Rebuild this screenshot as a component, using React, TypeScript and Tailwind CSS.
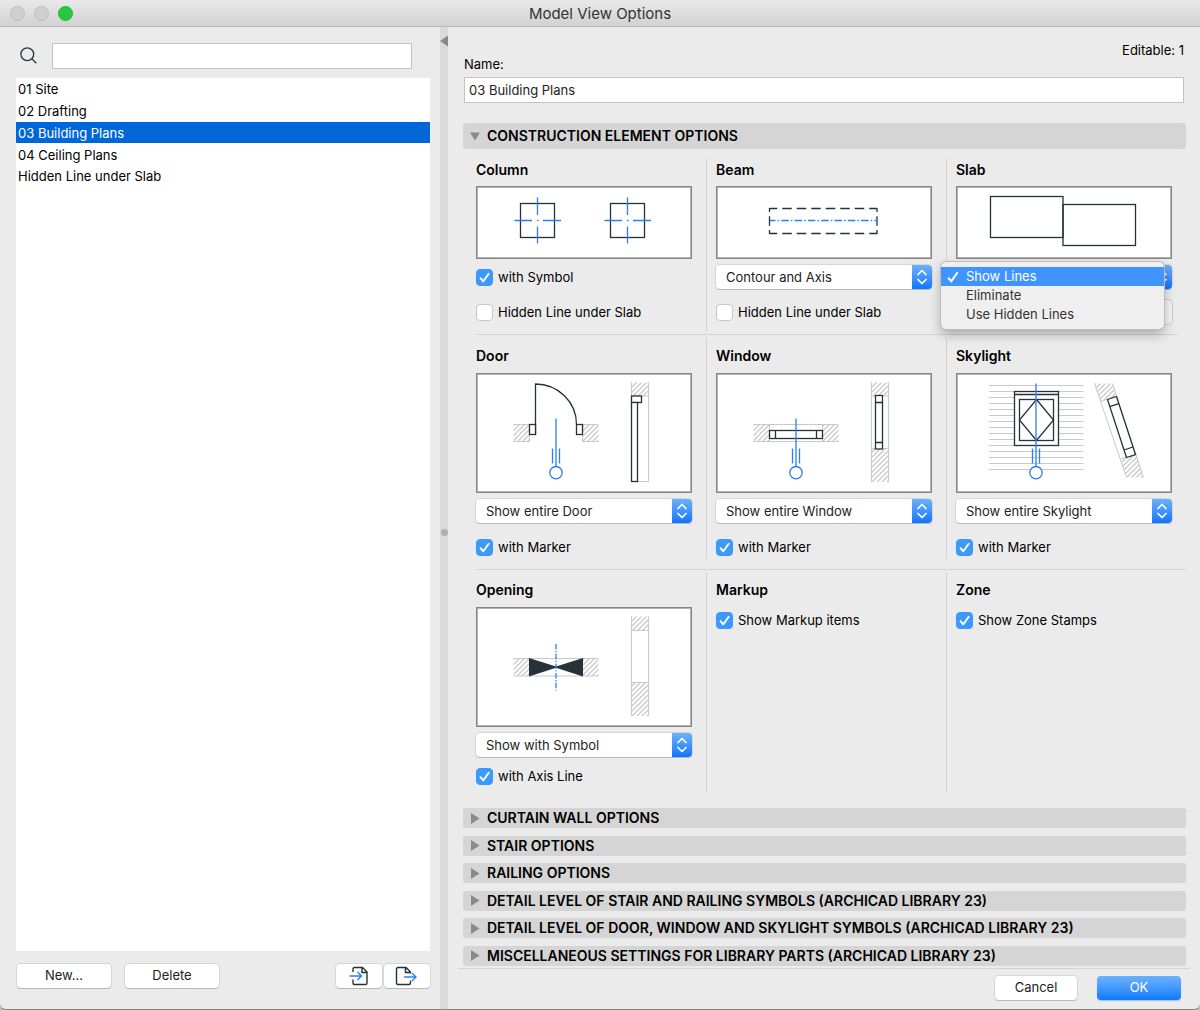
import { useState, type ReactNode } from "react";

const INK = "#263238";
const BLUE = "#2b7cff";
const PALE = "#c9c9c9";

const views = ["01 Site", "02 Drafting", "03 Building Plans", "04 Ceiling Plans", "Hidden Line under Slab"];

const closedSections = [
  "CURTAIN WALL OPTIONS",
  "STAIR OPTIONS",
  "RAILING OPTIONS",
  "DETAIL LEVEL OF STAIR AND RAILING SYMBOLS (ARCHICAD LIBRARY 23)",
  "DETAIL LEVEL OF DOOR, WINDOW AND SKYLIGHT SYMBOLS (ARCHICAD LIBRARY 23)",
  "MISCELLANEOUS SETTINGS FOR LIBRARY PARTS (ARCHICAD LIBRARY 23)",
];

function Hatch({ id }: { id: string }) {
  return (
    <defs>
      <pattern id={id} width="5" height="5" patternUnits="userSpaceOnUse">
        <path d="M-1 1 L1 -1 M0 5 L5 0 M4 6 L6 4" stroke={PALE} strokeWidth="1.3" />
      </pattern>
    </defs>
  );
}

function Marker({ top = 45.5 }: { top?: number }) {
  return (
    <g stroke={BLUE} strokeWidth="1.3" fill="none">
      <path d={`M80 ${top} V93.5 M76.5 75.5 V90.5 M83.5 75.5 V90.5`} />
      <circle cx="80" cy="99.7" r="6.2" fill="#fff" />
    </g>
  );
}

function Preview({ tall = false, label, children }: { tall?: boolean; label: string; children: ReactNode }) {
  return (
    <div
      className={
        tall
          ? "mt-[7px] flex h-[120px] items-center justify-center border border-[#858585] bg-white shadow-[inset_0_0_0_1px_#b4b4b4]"
          : "mt-[6px] flex h-[73px] items-center justify-center border border-[#858585] bg-white shadow-[inset_0_0_0_1px_#b4b4b4]"
      }
    >
      <svg
        role="img"
        aria-label={label}
        viewBox={tall ? "2 2 212 116" : "2 2 212 69"}
        className={tall ? "h-[116px] w-[212px] shrink-0" : "h-[69px] w-[212px] shrink-0"}
        fill="none"
      >
        {children}
      </svg>
    </div>
  );
}

function Title({ children }: { children: ReactNode }) {
  return <h3 className="h-5 text-sm leading-5 font-semibold">{children}</h3>;
}

function Popup({ label, value }: { label: string; value: string }) {
  return (
    <div className="relative h-6 rounded-[4px] bg-white shadow-[0_1px_0_#b8b8b8,0_0_0_1px_#d6d6d6]">
      <select aria-label={label} defaultValue={value} className="h-6 w-full appearance-none rounded-[4px] pr-6 pl-[10px] leading-6 text-[#222]">
        <option>{value}</option>
      </select>
      <span className="pointer-events-none absolute inset-y-0 right-0 flex w-5 items-center justify-center rounded-r-[4px] bg-linear-to-b from-[#6bb0fa] to-[#0a74fd]">
        <svg width="10" height="16" viewBox="0 0 10 16" fill="none" stroke="#fff" strokeWidth="1.7" strokeLinecap="round" strokeLinejoin="round" aria-hidden="true">
          <path d="M1 5.5 L5 1.5 L9 5.5 M1 10.5 L5 14.5 L9 10.5" />
        </svg>
      </span>
    </div>
  );
}

function Check({ label, checked = false }: { label: string; checked?: boolean }) {
  return (
    <label className="flex h-6 items-center gap-[5px]">
      <span className="relative h-[17px] w-[17px] shrink-0">
        <input
          type="checkbox"
          defaultChecked={checked}
          className="peer block h-[17px] w-[17px] appearance-none rounded-[4px] border border-[#c6c6c6] bg-white checked:border-[#3b99fc] checked:bg-[#3b99fc]"
        />
        <svg viewBox="0 0 17 17" className="pointer-events-none absolute inset-0 hidden h-[17px] w-[17px] peer-checked:block" fill="none" stroke="#fff" strokeWidth="1.9" strokeLinecap="round" strokeLinejoin="round" aria-hidden="true">
          <path d="M4.5 9.2 L7.3 12.3 L12.7 4.8" />
        </svg>
      </span>
      <span className="pt-0.5">{label}</span>
    </label>
  );
}

function ColumnDrawing() {
  return (
    <>
      {[62, 152].map((cx) => (
        <g key={cx}>
          <rect x={cx - 17.5} y="17.5" width="34" height="34" stroke={INK} strokeWidth="1.3" />
          <path
            d={`M${cx - 23.5} 34.5 h17.5 M${cx - 1} 34.5 h1.5 M${cx + 5} 34.5 h18 M${cx - 0.5} 11.5 v17.5 M${cx - 0.5} 40.5 v17`}
            stroke={BLUE}
            strokeWidth="1.3"
          />
        </g>
      ))}
    </>
  );
}

function BeamDrawing() {
  return (
    <>
      <path d="M53.5 22.5 H161 M53.5 47.5 H161" stroke={INK} strokeWidth="1.3" strokeDasharray="9.5 5" strokeDashoffset="1.75" />
      <path d="M53.5 22 V48 M161 22 V48" stroke={INK} strokeWidth="1.3" strokeDasharray="4 4.25 9.5 4.25 4 20" />
      <path d="M54 34.5 H161" stroke={BLUE} strokeWidth="1.3" strokeDasharray="7.5 2.2 1.4 2.2" strokeDashoffset="2" />
    </>
  );
}

function SlabDrawing() {
  return (
    <g stroke={INK} strokeWidth="1.3">
      <rect x="34.5" y="10.5" width="72.5" height="41" />
      <rect x="107" y="18.5" width="72.5" height="41" />
    </g>
  );
}

function DoorDrawing() {
  return (
    <>
      <Hatch id="hatch-door" />
      <path d="M37.5 51.5 H53.5 V68.5 H37.5 Z M106.5 51.5 H122.5 V68.5 H106.5 Z M155.5 9.5 H172.5 V23 H155.5 Z" fill="url(#hatch-door)" />
      <path d="M37.5 51.5 H53.5 V68.5 H37.5 M122.5 51.5 H106.5 V68.5 H122.5 M155.5 9.5 V23 H172.5 M172.5 9.5 V108.5 H155.5" stroke={PALE} />
      <g stroke={INK} strokeWidth="1.3">
        <path d="M59.5 61.5 V11 C82 11 100.5 29 100.5 51.5" />
        <rect x="53.5" y="51.5" width="6" height="10" fill="#fff" />
        <rect x="100.5" y="51.5" width="6" height="10" fill="#fff" />
        <rect x="155.5" y="23" width="10" height="6.5" fill="#fff" />
        <rect x="155.5" y="29.5" width="6" height="79" fill="#fff" />
      </g>
      <Marker />
    </>
  );
}

function WindowDrawing() {
  return (
    <>
      <Hatch id="hatch-window" />
      <path d="M37.5 51.5 H53.5 V68.5 H37.5 Z M106.5 51.5 H122.5 V68.5 H106.5 Z M155.5 9.5 H172.5 V23 H155.5 Z M155.5 75.5 H172.5 V109 H155.5 Z" fill="url(#hatch-window)" />
      <path d="M37.5 51.5 H122.5 M37.5 68.5 H122.5 M53.5 51.5 V68.5 M106.5 51.5 V68.5 M155.5 9.5 V109 M172.5 9.5 V109 M155.5 23 H172.5 M155.5 75.5 H172.5" stroke={PALE} />
      <g stroke={INK} strokeWidth="1.3">
        <rect x="53.5" y="57.5" width="53" height="8" fill="#fff" />
        <path d="M59.5 57.5 V65.5 M100.5 57.5 V65.5" />
        <rect x="159.5" y="22.5" width="7" height="53.5" fill="#fff" />
        <path d="M159.5 29.5 H166.5 M159.5 69.5 H166.5" />
      </g>
      <Marker />
    </>
  );
}

function SkylightDrawing() {
  return (
    <>
      <Hatch id="hatch-skylight" />
      <path
        d={Array.from({ length: 15 }, (_, i) => `M33 ${12.5 + i * 6} H127.5`).join(" ")}
        stroke={PALE}
      />
      <g stroke={INK} strokeWidth="1.3">
        <rect x="58.5" y="18.5" width="44" height="54" fill="#fff" />
        <path d="M58.5 21.5 H102.5" />
        <rect x="63.5" y="26.5" width="34" height="41" />
        <path d="M80.5 26.5 L97.5 47 L80.5 67.5 L63.5 47 Z" />
      </g>
      <path d="M138.5 10.5 H156.5 L160.5 23 L144.5 28.5 Z M164.5 86 L180 81 L187.5 104.5 H170.5 Z" fill="url(#hatch-skylight)" />
      <path d="M138.5 10.5 L170.5 104.5 M156.5 10.5 L187.5 104.5 M144.5 28.5 L160.5 23 M164.5 86 L180 81" stroke={PALE} />
      <g stroke={INK} strokeWidth="1.3">
        <path d="M151.5 26.5 L160.5 23.5 L179.5 81.5 L170.5 84.5 Z" fill="#fff" />
        <path d="M153.8 33.7 L162.8 30.7 M168 77 L177 74" />
      </g>
      <Marker top={10.5} />
    </>
  );
}

function OpeningDrawing() {
  return (
    <>
      <Hatch id="hatch-opening" />
      <path d="M37.5 51.5 H53.5 V69 H37.5 Z M106.5 51.5 H122.5 V69 H106.5 Z M155.5 9.5 H172.5 V23.5 H155.5 Z M155.5 75.5 H172.5 V109 H155.5 Z" fill="url(#hatch-opening)" />
      <path d="M37.5 51.5 H122.5 M37.5 69 H122.5 M155.5 9.5 V109 M172.5 9.5 V109 M155.5 23.5 H172.5 M155.5 75.5 H172.5" stroke={PALE} />
      <path d="M53 51 L80 59.6 L107 51 V69.5 L80 60.8 L53 69.5 Z" fill={INK} />
      <path d="M80 37 V83.5" stroke={BLUE} strokeWidth="1.3" strokeDasharray="5.5 1.5 1.2 1.5" />
    </>
  );
}

function Cell({ pad, children }: { pad: string; children: ReactNode }) {
  return <div className={`border-l border-[#d3d3d3] pr-[14px] pl-[9px] first:border-transparent ${pad}`}>{children}</div>;
}

function Menu() {
  const [chosen, setChosen] = useState("Show Lines");
  return (
    <ul
      role="listbox"
      aria-label="Slab lines"
      className="absolute -top-[3px] -left-[15px] z-10 w-[223px] rounded-[5px] bg-[#efefef] py-[5px] text-[#333] shadow-[0_0_0_1px_#bcbcbc,0_5px_12px_rgba(0,0,0,0.3)]"
    >
      {["Show Lines", "Eliminate", "Use Hidden Lines"].map((item) => (
        <li key={item} role="option" aria-selected={item === chosen}>
          <button
            type="button"
            onClick={() => setChosen(item)}
            className={
              item === chosen
                ? "flex h-[19px] w-full items-center bg-[#3f95fd] pl-[6px] text-white"
                : "flex h-[19px] w-full items-center pl-[6px]"
            }
          >
            <span className="flex w-[19px] shrink-0">
              {item === chosen && (
                <svg width="12" height="12" viewBox="0 0 12 12" fill="none" stroke="#fff" strokeWidth="2" aria-hidden="true">
                  <path d="M1.2 6.8 L4.4 10.2 L10.6 1.2" />
                </svg>
              )}
            </span>
            {item}
          </button>
        </li>
      ))}
    </ul>
  );
}

const pushButton =
  "rounded-[4px] bg-white text-[#222] shadow-[0_1px_0_#b8b8b8,0_0_0_1px_#d6d6d6]";

export default function App() {
  const [selected, setSelected] = useState("03 Building Plans");

  return (
    <div className="bg-[#b9b9b9] font-['Inter','Liberation_Sans',sans-serif] text-[13px] text-black">
      <div className="flex min-h-screen flex-col overflow-hidden rounded-b-[6px] border-b border-[#858585] bg-[#ebebeb]">
        <header className="grid h-[27px] grid-cols-[1fr_auto_1fr] items-center border-b border-[#bababa] bg-linear-to-b from-[#e9e9e9] to-[#d2d2d2]">
          <div className="flex gap-[9px] pl-[10px]">
            <button type="button" aria-label="Close" className="h-[15px] w-[15px] rounded-full border border-[#bdbdbd] bg-[#cfcfcf]" />
            <button type="button" aria-label="Minimize" className="h-[15px] w-[15px] rounded-full border border-[#bdbdbd] bg-[#cfcfcf]" />
            <button type="button" aria-label="Zoom" className="h-[15px] w-[15px] rounded-full border border-[#1fb535] bg-[#28c940]" />
          </div>
          <h1 className="pt-0.5 text-[15px] leading-5 text-[#333]">Model View Options</h1>
        </header>

        <div className="flex flex-1">
          <aside className="flex w-[440px] shrink-0 flex-col pt-4 pr-[10px] pb-[21px] pl-4">
            <div className="flex items-center pr-[18px]">
              <svg width="20" height="20" viewBox="0 0 20 20" fill="none" stroke={INK} strokeWidth="1.3" className="mr-[13px] ml-[3px] shrink-0" aria-hidden="true">
                <circle cx="8.3" cy="8.3" r="6.4" />
                <path d="M12.9 12.9 L17.3 17.3" />
              </svg>
              <input type="search" aria-label="Search" className="h-[26px] min-w-0 flex-1 border border-[#c2c2c2] bg-white px-1" />
            </div>
            <div className="mt-[9px] flex-1 bg-white">
              <ul className="grid h-[109px] grid-rows-5">
                {views.map((v) => (
                  <li key={v} className="grid">
                    <button
                      type="button"
                      onClick={() => setSelected(v)}
                      className={v === selected ? "bg-[#0067d9] px-0.5 pt-0.5 text-left text-white" : "px-0.5 pt-0.5 text-left"}
                    >
                      {v}
                    </button>
                  </li>
                ))}
              </ul>
            </div>
            <div className="mt-3 flex h-[25px] items-center">
              <button type="button" className={`ml-px h-6 w-[94px] ${pushButton}`}>New...</button>
              <button type="button" className={`ml-[14px] h-6 w-[94px] ${pushButton}`}>Delete</button>
              <button type="button" aria-label="Import" className={`ml-auto flex h-6 w-[46px] items-center justify-center ${pushButton}`}>
                <svg width="24" height="20" viewBox="0 0 24 20" fill="none" strokeWidth="1.4" aria-hidden="true">
                  <path d="M6 6 V3 Q6 1.5 7.5 1.5 H15.5 L20 6 V17 Q20 18.5 18.5 18.5 H7.5 Q6 18.5 6 17 V13.5 M15 2 V6.5 H20" stroke={INK} />
                  <path d="M2.5 10 H14.5 M10.5 6 L14.5 10 L10.5 14" stroke={BLUE} />
                </svg>
              </button>
              <button type="button" aria-label="Export" className={`ml-[2px] flex h-6 w-[46px] items-center justify-center ${pushButton}`}>
                <svg width="24" height="20" viewBox="0 0 24 20" fill="none" strokeWidth="1.4" aria-hidden="true">
                  <path d="M15.5 7.5 V6 L11 1.5 H3 Q1.5 1.5 1.5 3 V17 Q1.5 18.5 3 18.5 H14 Q15.5 18.5 15.5 17 V14.5 M10.5 2 V6.5 H15.5" stroke={INK} />
                  <path d="M9 11 H21 M17 7 L21 11 L17 15" stroke={BLUE} />
                </svg>
              </button>
            </div>
          </aside>

          <div className="flex w-2 shrink-0 flex-col bg-[#dadada] pt-2">
            <svg width="8" height="12" viewBox="0 0 8 12" aria-hidden="true">
              <path d="M0 6 L8 0.5 V11.5 Z" fill="#8a8a8a" />
            </svg>
            <div className="flex flex-1 items-center justify-center pt-2">
              <span className="h-[7px] w-[7px] rounded-full bg-[#b0b0b0]" />
            </div>
          </div>

          <main className="flex min-w-0 flex-1 flex-col pt-[13px]">
            <div className="flex h-[34px] justify-between px-4 leading-5">
              <label htmlFor="view-name" className="self-end">Name:</label>
              <p>Editable: 1</p>
            </div>
            <div className="mt-[3px] flex px-4">
              <input id="view-name" defaultValue="03 Building Plans" className="h-[26px] min-w-0 flex-1 border border-[#c2c2c2] bg-white px-1 text-[#222]" />
            </div>

            <h2 className="mt-5 mr-[14px] ml-[15px]">
              <button type="button" aria-expanded="true" className="flex h-[26px] w-full items-center rounded-[3px] bg-[#d5d5d5] pl-[7px] text-sm font-semibold">
                <svg width="10" height="9" viewBox="0 0 10 9" className="mr-[7px]" aria-hidden="true">
                  <path d="M0 0.5 H10 L5 8.5 Z" fill="#8a8a8a" />
                </svg>
                CONSTRUCTION ELEMENT OPTIONS
              </button>
            </h2>

            <div className="mt-[9px] mr-[14px] ml-[18px]">
              <div className="grid grid-cols-3">
                <Cell pad="pt-[2px] pb-[7px]">
                  <Title>Column</Title>
                  <Preview label="Column symbol"><ColumnDrawing /></Preview>
                  <div className="mt-[6px]"><Check label="with Symbol" checked /></div>
                  <div className="mt-[11px]"><Check label="Hidden Line under Slab" /></div>
                </Cell>
                <Cell pad="pt-[2px] pb-[7px]">
                  <Title>Beam</Title>
                  <Preview label="Beam symbol"><BeamDrawing /></Preview>
                  <div className="mt-[6px]"><Popup label="Beam display" value="Contour and Axis" /></div>
                  <div className="mt-[11px]"><Check label="Hidden Line under Slab" /></div>
                </Cell>
                <Cell pad="pt-[2px] pb-[7px]">
                  <Title>Slab</Title>
                  <Preview label="Slab symbol"><SlabDrawing /></Preview>
                  <div className="relative mt-[6px]">
                    <Popup label="Slab display" value="Show Lines" />
                    <button type="button" aria-label="Slab line type" className="mt-[11px] block h-6 w-full rounded-[4px] bg-[#f4f4f4] shadow-[0_0_0_1px_#c9c9c9]" />
                    <Menu />
                  </div>
                </Cell>
              </div>
              <hr className="mt-[3px] mr-2 ml-[10px] border-[#d3d3d3]" />

              <div className="mt-[3px] grid grid-cols-3">
                <Cell pad="pt-2">
                  <Title>Door</Title>
                  <Preview tall label="Door symbol"><DoorDrawing /></Preview>
                  <div className="mt-[6px]"><Popup label="Door display" value="Show entire Door" /></div>
                  <div className="mt-3"><Check label="with Marker" checked /></div>
                </Cell>
                <Cell pad="pt-2">
                  <Title>Window</Title>
                  <Preview tall label="Window symbol"><WindowDrawing /></Preview>
                  <div className="mt-[6px]"><Popup label="Window display" value="Show entire Window" /></div>
                  <div className="mt-3"><Check label="with Marker" checked /></div>
                </Cell>
                <Cell pad="pt-2">
                  <Title>Skylight</Title>
                  <Preview tall label="Skylight symbol"><SkylightDrawing /></Preview>
                  <div className="mt-[6px]"><Popup label="Skylight display" value="Show entire Skylight" /></div>
                  <div className="mt-3"><Check label="with Marker" checked /></div>
                </Cell>
              </div>
              <hr className="mt-[10px] ml-[10px] border-[#d3d3d3]" />

              <div className="mt-[3px] grid grid-cols-3">
                <Cell pad="pt-[7px] pb-1">
                  <Title>Opening</Title>
                  <Preview tall label="Opening symbol"><OpeningDrawing /></Preview>
                  <div className="mt-[6px]"><Popup label="Opening display" value="Show with Symbol" /></div>
                  <div className="mt-[7px]"><Check label="with Axis Line" checked /></div>
                </Cell>
                <Cell pad="pt-[7px] pb-1">
                  <Title>Markup</Title>
                  <div className="mt-2"><Check label="Show Markup items" checked /></div>
                </Cell>
                <Cell pad="pt-[7px] pb-1">
                  <Title>Zone</Title>
                  <div className="mt-2"><Check label="Show Zone Stamps" checked /></div>
                </Cell>
              </div>
            </div>

            <div className="mt-4 mr-[14px] ml-[15px] flex flex-1 flex-col justify-between">
              {closedSections.map((s) => (
                <h2 key={s}>
                  <button type="button" aria-expanded="false" className="flex h-5 w-full items-center rounded-[3px] bg-[#d5d5d5] pl-2 text-left text-sm font-semibold whitespace-nowrap">
                    <svg width="9" height="11" viewBox="0 0 9 11" className="mr-[7px] shrink-0" aria-hidden="true">
                      <path d="M0 0 L8.5 5.5 L0 11 Z" fill="#8a8a8a" />
                    </svg>
                    {s}
                  </button>
                </h2>
              ))}
            </div>

            <hr className="mx-[10px] mt-[2px] border-[#d3d3d3]" />
            <div className="flex justify-end gap-5 pt-[7px] pr-[19px] pb-[9px]">
              <button type="button" className={`h-6 w-[82px] ${pushButton}`}>Cancel</button>
              <button type="button" className="h-6 w-[84px] rounded-[4px] bg-linear-to-b from-[#6bb3fa] to-[#087aff] text-white shadow-[0_1px_1px_#9fc4ee]">OK</button>
            </div>
          </main>
        </div>
      </div>
    </div>
  );
}
